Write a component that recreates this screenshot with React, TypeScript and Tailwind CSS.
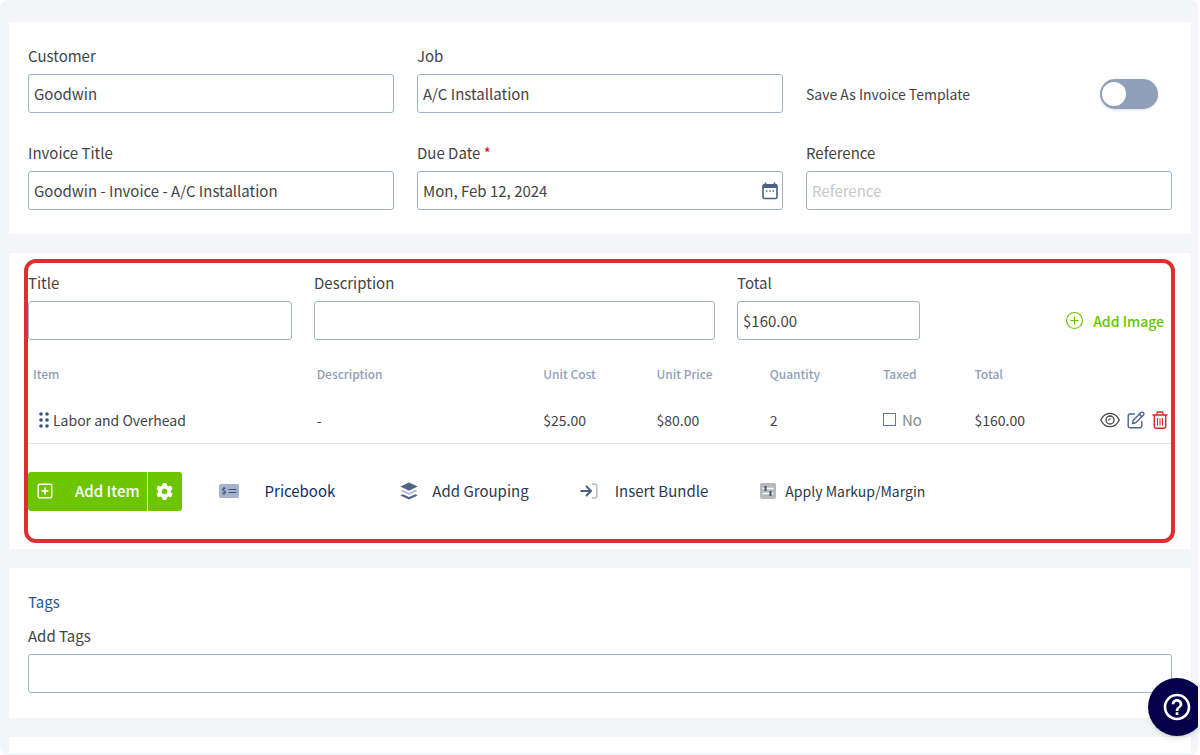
import { useState } from "react";
import type { ReactNode } from "react";
import clsx from "clsx";
import { SquarePlus } from "lucide-react";
import { FaGear } from "react-icons/fa6";
import { MdHelpOutline } from "react-icons/md";
import { BsPlusCircle } from "react-icons/bs";

type LineItem = {
  id: string;
  name: string;
  description: string;
  unitCost: string;
  unitPrice: string;
  quantity: number;
  taxed: boolean;
  total: string;
};

const initialItems: LineItem[] = [
  {
    id: "labor",
    name: "Labor and Overhead",
    description: "-",
    unitCost: "$25.00",
    unitPrice: "$80.00",
    quantity: 2,
    taxed: false,
    total: "$160.00",
  },
];

const columns = [
  { label: "Item", width: "w-[24.8%]" },
  { label: "Description", width: "w-[19.8%]" },
  { label: "Unit Cost", width: "w-[9.9%]" },
  { label: "Unit Price", width: "w-[9.9%]" },
  { label: "Quantity", width: "w-[9.9%]" },
  { label: "Taxed", width: "w-[8%]" },
  { label: "Total", width: "w-[10%]" },
];

function CalendarIcon() {
  return (
    <svg viewBox="0 0 16 18" className="w-4 h-[18px]" fill="none">
      <rect x="1" y="3" width="14" height="13.5" rx="1.5" stroke="#4c6186" strokeWidth="1.6" />
      <path d="M.5 3.5A1.5 1.5 0 0 1 2 2h12a1.5 1.5 0 0 1 1.5 1.5V6H.5z" fill="#4c6186" />
      <path d="M3.5 .5v3M12.5 .5v3" stroke="#4c6186" strokeWidth="1.6" />
      <path d="M4 9h1.4M7.3 9h1.4M10.6 9H12" stroke="#4c6186" strokeWidth="1.5" />
    </svg>
  );
}

function GripIcon() {
  return (
    <svg viewBox="0 0 10 16" className="w-[10px] h-4 shrink-0" fill="#3c5480">
      <circle cx="2" cy="2" r="1.8" />
      <circle cx="8" cy="2" r="1.8" />
      <circle cx="2" cy="8" r="1.8" />
      <circle cx="8" cy="8" r="1.8" />
      <circle cx="2" cy="14" r="1.8" />
      <circle cx="8" cy="14" r="1.8" />
    </svg>
  );
}

function EyeIcon() {
  return (
    <svg viewBox="0 0 20 16" className="w-5 h-4" fill="none" stroke="#444" strokeWidth="1.3">
      <path d="M.8 8C2.6 4.2 6 1.3 10 1.3S17.4 4.2 19.2 8C17.4 11.8 14 14.7 10 14.7S2.6 11.8.8 8z" />
      <circle cx="10" cy="8" r="4" />
      <path d="M8 8.200a2 2 0 0 0 2.200-2.200" strokeWidth="1" />
    </svg>
  );
}

function EditIcon() {
  return (
    <svg
      viewBox="0 0 18 18"
      className="w-[18px] h-[18px]"
      fill="none"
      stroke="#4a6390"
      strokeWidth="1.4"
      strokeLinecap="round"
      strokeLinejoin="round"
    >
      <path d="M7.5 3H3A1.8 1.8 0 0 0 1.2 4.8V15A1.8 1.8 0 0 0 3 16.8h10A1.8 1.8 0 0 0 14.8 15v-4.5" />
      <path d="M6.3 9.2 14 1.5a1.4 1.4 0 0 1 2 0l.5.5a1.4 1.4 0 0 1 0 2L8.8 11.7l-3.3.8z" />
      <path d="m12.3 3.2 2.5 2.5" />
    </svg>
  );
}

function TrashIcon() {
  return (
    <svg viewBox="0 0 16 18" className="w-4 h-[18px]" fill="none" stroke="#e02020" strokeLinejoin="round">
      <path d="M1 4h14" strokeWidth="1.5" strokeLinecap="round" />
      <path d="M4.5 3.8 5.6 1h4.8l1.1 2.8" strokeWidth="1.3" />
      <path d="M2.3 4v11.5A1.7 1.7 0 0 0 4 17.2h8a1.7 1.7 0 0 0 1.700-1.700V4" strokeWidth="1.4" />
      <path d="M5.5 7v7.5M8 7v7.5M10.5 7v7.5" strokeWidth="1" />
    </svg>
  );
}

function PricebookIcon() {
  return (
    <svg viewBox="0 0 20 14" className="w-5 h-[14px]" fill="none">
      <rect width="20" height="14" rx="2" fill="#a3b3cb" />
      <path
        d="M6.300 5c-.3-.6-2.600-.8-2.600.5 0 1.600 2.700.9 2.700 2.500 0 1.400-2.400 1.300-2.900.4M5 3v1M5 9.500v1.500"
        stroke="#2f466f"
        strokeWidth="1.1"
      />
      <path d="M9.500 5.500h8M9.500 8.500h8" stroke="#3a5078" strokeWidth="1" />
    </svg>
  );
}

function LayersIcon() {
  return (
    <svg viewBox="0 0 18 18" className="w-[18px] h-[18px]">
      <path d="M9 .5 17.7 4.600 9 8.700.3 4.600z" fill="#4f648a" />
      <path d="M.3 9 2.800 7.800 9 10.700l6.200-2.900L17.700 9 9 13.100z" fill="#b6c0d2" />
      <path d="M.3 13.400 2.800 12.200 9 15.100l6.200-2.900 2.500 1.200L9 17.500z" fill="#4f648a" />
    </svg>
  );
}

function InsertIcon() {
  return (
    <svg viewBox="0 0 18 16" className="w-[18px] h-4" fill="none" strokeLinecap="round" strokeLinejoin="round">
      <path
        d="M12.500 1.200H15A1.800 1.800 0 0 1 16.800 3v10a1.800 1.800 0 0 1-1.800 1.800h-2.500"
        stroke="#b9c2d2"
        strokeWidth="1.7"
      />
      <path d="M1.200 8h9.300M6.500 3.500 11 8l-4.500 4.500" stroke="#4a6088" strokeWidth="2" />
    </svg>
  );
}

function MarkupIcon() {
  return (
    <svg viewBox="0 0 16 16" className="w-4 h-4" fill="none">
      <rect width="16" height="16" rx="2" fill="#b4babf" />
      <path d="M2.500 5.500h11M2.500 10.500h11" stroke="#fff" strokeWidth="1.6" />
      <path d="M5.500 3v5M10.500 8v5" stroke="#44535e" strokeWidth="2" />
    </svg>
  );
}

function Card({ children, className }: { children?: ReactNode; className?: string }) {
  return <section className={clsx("bg-white px-[19px]", className)}>{children}</section>;
}

type FieldProps = {
  id: string;
  label: string;
  value?: string;
  placeholder?: string;
  required?: boolean;
  icon?: ReactNode;
};

function Field({ id, label, value, placeholder, required, icon }: FieldProps) {
  return (
    <div className="flex flex-col gap-1.5 min-w-0">
      <label htmlFor={id} className="leading-6">
        {label}
        {required && <span className="text-red-600"> *</span>}
      </label>
      <div className="relative">
        <input
          id={id}
          type="text"
          defaultValue={value}
          placeholder={placeholder}
          className="block w-full h-[39px] px-[5px] border border-[#a3b0c6] rounded-[3px] bg-white placeholder:text-[#c8c8c8] outline-none focus:border-[#4c6186]"
        />
        {icon && (
          <button type="button" aria-label="Open calendar" className="absolute right-[5px] inset-y-0 flex items-center">
            {icon}
          </button>
        )}
      </div>
    </div>
  );
}

export default function App() {
  const [items, setItems] = useState(initialItems);

  const toggleTaxed = (id: string) => {
    setItems((prev) => prev.map((i) => (i.id === id ? { ...i, taxed: !i.taxed } : i)));
  };

  return (
    <div className="bg-white">
      <main className="relative mr-0.5 min-h-screen overflow-hidden rounded-lg bg-[#f4f5f8] pl-[9px] pr-[7px] pt-[22px] pb-0.5 flex flex-col gap-[19px] font-['Noto_Sans_CJK_SC',sans-serif] text-[15px] text-[#444]">
        {/* Invoice details */}
        <Card className="pt-[22px] pb-6 grid grid-cols-3 gap-x-[23px] gap-y-7">
          <Field id="customer" label="Customer" value="Goodwin" />
          <Field id="job" label="Job" value="A/C Installation" />
          <div className="self-end h-[39px] pr-[14px] flex items-center justify-between">
            <label htmlFor="save-template" className="text-sm">
              Save As Invoice Template
            </label>
            <label className="cursor-pointer">
              <input id="save-template" type="checkbox" className="sr-only peer" />
              <span className="flex items-center w-[58px] h-[30px] px-0.5 rounded-full bg-[#91a0b9] shadow peer-checked:bg-[#6fc400] peer-checked:justify-end">
                <span className="w-6 h-6 rounded-full bg-white" />
              </span>
            </label>
          </div>
          <Field id="invoice-title" label="Invoice Title" value="Goodwin - Invoice - A/C Installation" />
          <Field id="due-date" label="Due Date" value="Mon, Feb 12, 2024" required icon={<CalendarIcon />} />
          <Field id="reference" label="Reference" placeholder="Reference" />
        </Card>

        {/* Line items */}
        <Card className="relative pt-[18px] pb-[38px]">
          <div className="grid grid-cols-[264fr_401fr_183fr_230fr] gap-x-[22px]">
            <Field id="group-title" label="Title" />
            <Field id="group-description" label="Description" />
            <Field id="group-total" label="Total" value="$160.00" />
            <button
              type="button"
              className="self-end justify-self-end h-[39px] pr-2 flex items-center gap-[10px] text-sm font-medium text-[#66c400]"
            >
              <BsPlusCircle className="w-[17px] h-[17px]" />
              Add Image
            </button>
          </div>

          <table className="mt-[10px] w-full table-fixed border-collapse text-left text-sm">
            <thead>
              <tr className="h-[47px] text-xs text-[#8f9fba]">
                {columns.map((col) => (
                  <th key={col.label} className={clsx("px-[5px] font-medium", col.width)}>
                    {col.label}
                  </th>
                ))}
                <th aria-label="Actions" />
              </tr>
            </thead>
            <tbody>
              {items.map((item) => (
                <tr key={item.id} className="h-[46px] border-b border-[#e6e6e8]">
                  <td className="pl-[11px]">
                    <div className="flex items-center gap-1">
                      <GripIcon />
                      {item.name}
                    </div>
                  </td>
                  <td className="px-[5px]">{item.description}</td>
                  <td className="px-[5px]">{item.unitCost}</td>
                  <td className="px-[5px]">{item.unitPrice}</td>
                  <td className="px-[5px]">{item.quantity}</td>
                  <td className="px-[5px]">
                    <label className="flex items-center gap-1.5 text-[15px] text-[#8a8a8a]">
                      <input
                        type="checkbox"
                        checked={item.taxed}
                        onChange={() => toggleTaxed(item.id)}
                        className="appearance-none w-[13px] h-[13px] border border-[#5f7ba6] bg-white checked:bg-[#5f7ba6]"
                      />
                      {item.taxed ? "Yes" : "No"}
                    </label>
                  </td>
                  <td className="px-[5px]">{item.total}</td>
                  <td className="pr-1">
                    <div className="flex items-center justify-end gap-[7px]">
                      <button type="button" aria-label="View">
                        <EyeIcon />
                      </button>
                      <button type="button" aria-label="Edit">
                        <EditIcon />
                      </button>
                      <button type="button" aria-label="Delete">
                        <TrashIcon />
                      </button>
                    </div>
                  </td>
                </tr>
              ))}
            </tbody>
          </table>

          <div className="mt-7 h-[39px] flex items-center text-[#2c3a4b]">
            <div className="flex h-full gap-px rounded-[3px] overflow-hidden text-white">
              <button type="button" className="flex items-center gap-[21px] pl-2 pr-[7px] bg-[#6fc400] font-medium">
                <SquarePlus className="w-[18px] h-[18px]" />
                Add Item
              </button>
              <button type="button" aria-label="Item settings" className="w-[34px] flex items-center justify-center bg-[#6fc400]">
                <FaGear className="w-[17px] h-[17px]" />
              </button>
            </div>
            <button type="button" className="ml-[37px] flex items-center gap-[26px] text-[#12305f]">
              <PricebookIcon />
              Pricebook
            </button>
            <button type="button" className="ml-[65px] flex items-center gap-[14px]">
              <LayersIcon />
              Add Grouping
            </button>
            <button type="button" className="ml-[51px] flex items-center gap-[17px]">
              <InsertIcon />
              Insert Bundle
            </button>
            <button type="button" className="ml-[52px] flex items-center gap-[9px] text-sm">
              <MarkupIcon />
              Apply Markup/Margin
            </button>
          </div>

          {/* Highlight frame */}
          <div className="pointer-events-none absolute inset-y-1.5 left-[15px] right-4 rounded-xl border-4 border-[#dc3030]" />
        </Card>

        {/* Tags */}
        <Card className="pt-[22px] pb-[25px] flex flex-col gap-[10px]">
          <h2 className="leading-6 text-[#25588f]">Tags</h2>
          <Field id="tags" label="Add Tags" />
        </Card>

        <Card className="flex-1" />

        <button
          type="button"
          aria-label="Help"
          className="absolute -right-2 bottom-[19px] w-[58px] h-[58px] rounded-full bg-[#05014a] text-white shadow-md flex items-center justify-center"
        >
          <MdHelpOutline className="w-8 h-8" />
        </button>
      </main>
    </div>
  );
}
